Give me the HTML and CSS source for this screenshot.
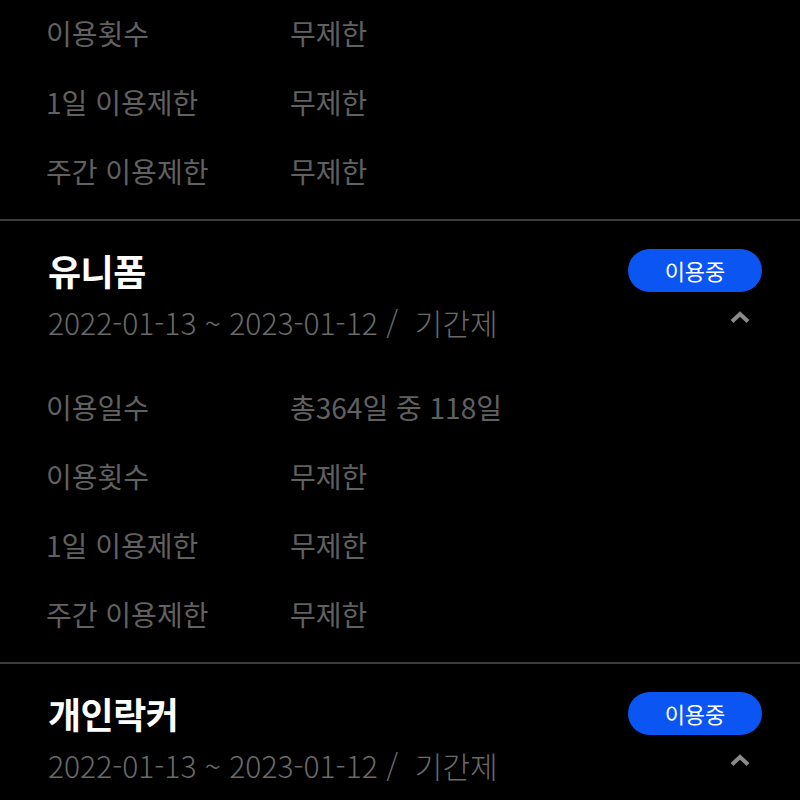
FILE: index.html
```html
<!DOCTYPE html>
<html lang="ko">
<head>
  <meta charset="UTF-8" />
  <title>이용권 상세</title>
  <link rel="stylesheet" href="styles.css">
</head>
<body>
  <main class="pass-list">
    <section class="pass partial">
      <dl class="usage">
        <div class="usage-row"><dt>이용횟수</dt><dd>무제한</dd></div>
        <div class="usage-row"><dt>1일 이용제한</dt><dd>무제한</dd></div>
        <div class="usage-row"><dt>주간 이용제한</dt><dd>무제한</dd></div>
      </dl>
    </section>

    <section class="pass">
      <div class="pass-head">
        <h2 class="pass-name">유니폼</h2>
        <span class="badge">이용중</span>
      </div>
      <div class="pass-period">
        <span class="period-text">2022-01-13 ~ 2023-01-12 /&nbsp; 기간제</span>
        <button class="toggle" type="button" aria-label="접기">
          <svg viewBox="0 0 22 14" width="22" height="14" aria-hidden="true">
            <polyline points="3,11.5 11,4 19,11.5" fill="none" stroke="#8a8a8a" stroke-width="4" stroke-linecap="butt" stroke-linejoin="miter"/>
          </svg>
        </button>
      </div>
      <dl class="usage">
        <div class="usage-row"><dt>이용일수</dt><dd>총364일 중 118일</dd></div>
        <div class="usage-row"><dt>이용횟수</dt><dd>무제한</dd></div>
        <div class="usage-row"><dt>1일 이용제한</dt><dd>무제한</dd></div>
        <div class="usage-row"><dt>주간 이용제한</dt><dd>무제한</dd></div>
      </dl>
    </section>

    <section class="pass">
      <div class="pass-head">
        <h2 class="pass-name">개인락커</h2>
        <span class="badge">이용중</span>
      </div>
      <div class="pass-period">
        <span class="period-text">2022-01-13 ~ 2023-01-12 /&nbsp; 기간제</span>
        <button class="toggle" type="button" aria-label="접기">
          <svg viewBox="0 0 22 14" width="22" height="14" aria-hidden="true">
            <polyline points="3,11.5 11,4 19,11.5" fill="none" stroke="#8a8a8a" stroke-width="4" stroke-linecap="butt" stroke-linejoin="miter"/>
          </svg>
        </button>
      </div>
    </section>
  </main>
</body>
</html>
```

FILE: styles.css
```css
* {
  box-sizing: border-box;
}

html, body {
  background-color: #000;
}

body {
  margin: 0;
  font-family: "Noto Sans CJK KR", "Noto Sans", sans-serif;
  color: #616161;
  overflow: hidden;
}

.pass-list {
  display: flex;
  flex-direction: column;
}

.pass {
  border-top: 2px solid #3c3c3c;
  padding: 27px 38px 0 46px;
}

.pass.partial {
  border-top: none;
  padding-top: 0;
  margin-top: -2px;
}

.pass-head {
  display: flex;
  align-items: center;
  justify-content: space-between;
  height: 44px;
}

.pass-name {
  margin: 0 0 0 2px;
  font-size: 36px;
  font-weight: 700;
  color: #fff;
  line-height: 44px;
  letter-spacing: -0.5px;
}

.badge {
  width: 134px;
  height: 43px;
  border-radius: 22px;
  background-color: #0b55f2;
  color: #fff;
  font-size: 22px;
  line-height: 43px;
  text-align: center;
}

.pass-period {
  display: flex;
  align-items: center;
  justify-content: space-between;
  height: 40px;
  margin-top: 10px;
}

.period-text {
  margin-left: 2px;
  font-size: 30px;
  font-weight: 300;
  color: #6a6a6a;
  line-height: 40px;
}

.toggle {
  background: none;
  border: none;
  padding: 0;
  margin: 0 11px 10px 0;
  display: flex;
  cursor: pointer;
}

.usage {
  margin: 30px 0 0;
  padding-bottom: 14px;
}

.partial .usage {
  margin-top: 0;
}

.usage-row {
  display: flex;
  height: 69px;
  align-items: center;
  font-size: 28px;
}

.usage-row dt {
  width: 244px;
}

.usage-row dd {
  margin: 0;
}
```
